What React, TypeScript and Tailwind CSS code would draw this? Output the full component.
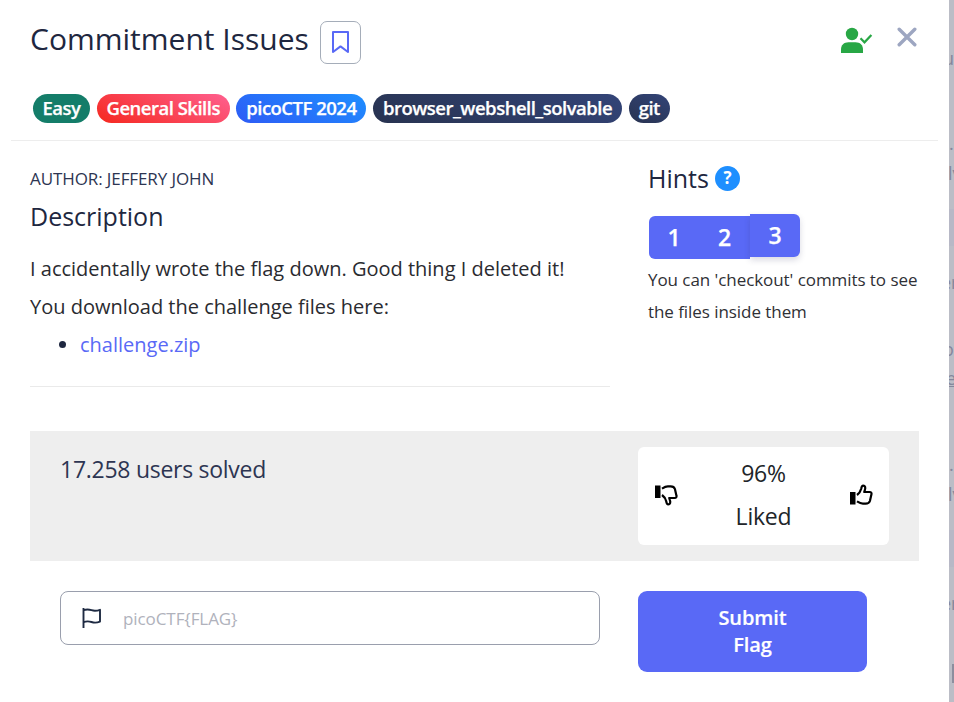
import React from "react";

const tags = [
  { label: "Easy", width: "w-[57px]", fill: "bg-[#147d69]" },
  { label: "General Skills", width: "w-[133px]", fill: "bg-[linear-gradient(25deg,#f5281e,#ff6090)]" },
  { label: "picoCTF 2024", width: "w-[130px]", fill: "bg-[linear-gradient(25deg,#2d5bf5,#1e8fff)]" },
  { label: "browser_webshell_solvable", width: "w-[249px]", fill: "bg-[linear-gradient(25deg,#283350,#334478)]" },
  { label: "git", width: "w-[41px]", fill: "bg-[linear-gradient(25deg,#283350,#334478)]" },
];

function Thumb({ down = false }: { down?: boolean }) {
  return (
    <svg width="24" height="22" viewBox="0 0 24 22" fill="none" className={down ? "relative -top-px -scale-y-100" : "relative -top-px"}>
      <rect x="1" y="8" width="5.500" height="12.500" fill="#000" />
      <path
        d="M8 11C10.400 9.200 11.600 7.300 12.200 4.800c.3-1.700.7-3.100 2-3.100 2 0 2.500 2 1.700 4.200L15.200 8h5.300c1.900 0 2.300 1.200 1.900 2.600L20.900 17c-.7 2.200-2 2.600-4.300 2.600h-2.700c-2.300 0-3.500-.7-5.900-2.200"
        stroke="#000"
        strokeWidth="2.200"
        strokeLinejoin="round"
      />
    </svg>
  );
}

function Flag() {
  return (
    <svg width="20" height="22" viewBox="0 0 20 22" fill="none" stroke="#1e2a42" strokeWidth="1.900">
      <path d="M1.500 1v20" />
      <path d="M1.500 3.200c3-1 5.500-.8 8 0s5 .8 8.500-.4v11.800c-3.500 1.400-6 1.200-8.500.400s-5-.9-8 .1" strokeLinejoin="round" />
    </svg>
  );
}

function Bookmark() {
  return (
    <svg width="17" height="22" viewBox="0 0 17 22" fill="none" stroke="#5969f6" strokeWidth="2" strokeLinejoin="round" className="relative -top-px">
      <path d="M1 1h15v20l-7.500-5.600L1 21z" />
    </svg>
  );
}

function PersonCheck() {
  return (
    <svg width="32" height="27" viewBox="0 0 32 27" fill="#28a745" className="mt-[27px]">
      <circle cx="11" cy="7" r="6.200" />
      <path d="M0 26v-3.500C0 18 3 15.200 7.500 15.200h7C19 15.200 22 18 22 22.500V26z" />
      <path d="M19.500 11.300l4 4L30.400 8" fill="none" stroke="#28a745" strokeWidth="2.200" />
    </svg>
  );
}

function Backdrop() {
  return (
    <aside className="relative h-full w-[5px] shrink-0 overflow-hidden bg-[#bbbdc6] text-[18px] leading-[24px] text-[#85879c]">
      <div className="absolute top-[209px] h-[37px] w-full bg-[#b7b8c6]" />
      <div className="absolute top-[530px] h-[37px] w-full bg-[#b7b8c6]" />
      <span className="absolute top-[46px] -left-[6px]">u</span>
      <span className="absolute top-[131px] left-0">.</span>
      <span className="absolute top-[161px] -left-[1px]">lv</span>
      <span className="absolute top-[270px] -left-[8px]">er</span>
      <span className="absolute top-[337px] -left-[6px]">o</span>
      <span className="absolute top-[366px] -left-[3px] underline">e</span>
      <span className="absolute top-[452px] left-0">.</span>
      <span className="absolute top-[482px] -left-[1px]">lv</span>
      <span className="absolute top-[591px] -left-[8px]">er</span>
      <span className="absolute top-[664px] left-[3px] h-[19px] w-[2px] bg-[#8c8e9e]" />
    </aside>
  );
}

export default function App() {
  return (
    <div className="flex h-[702px] w-[954px] overflow-hidden bg-white font-['Open_Sans',sans-serif] text-[#1e2740]">
      <main className="flex min-w-0 flex-1 flex-col">
        <header className="mx-[11px] flex h-[141px] flex-col border-b border-[#ededed]">
          <div className="flex h-[94px] items-start pr-[21px] pl-[19px]">
            <h1 className="w-[290px] pt-[19px] text-[30px] leading-[40px] whitespace-nowrap">Commitment Issues</h1>
            <button className="mt-[21px] flex h-[43px] w-[41px] items-center justify-center rounded-[7px] border border-[#a5adb9]">
              <Bookmark />
            </button>
            <div className="ml-auto flex items-start">
              <PersonCheck />
              <button aria-label="Close" className="mt-[27px] ml-[24px]">
                <svg width="20" height="20" viewBox="0 0 20 20" stroke="#9da6c1" strokeWidth="3.400" strokeLinecap="round">
                  <path d="M2.200 2.200l15.600 15.600M17.800 2.200L2.200 17.800" />
                </svg>
              </button>
            </div>
          </div>
          <div className="flex gap-[6.700px] pl-[22px]">
            {tags.map((t) => (
              <span key={t.label} className={`flex h-[29px] shrink-0 items-center justify-center rounded-full pb-[2px] text-[18.500px] font-semibold tracking-[-0.500px] whitespace-nowrap text-white [-webkit-text-stroke:0.25px_white] ${t.width} ${t.fill}`}>
                {t.label}
              </span>
            ))}
          </div>
        </header>

        <section className="flex h-[290px] pl-[30px]">
          <div className="h-[246px] w-[580px] border-b border-[#eaeaea] pt-[26px]">
            <p className="text-[17px] leading-[24px] tracking-[-0.100px] text-[#2d3552]">AUTHOR: JEFFERY JOHN</p>
            <h2 className="pt-[9px] text-[25px] leading-[32px]">Description</h2>
            <div className="pt-[18px] text-[20px] leading-[38px] whitespace-nowrap text-[#2a2b30]">
              <p>I accidentally wrote the flag down. Good thing I deleted it!</p>
              <p>You download the challenge files here:</p>
            </div>
            <ul>
              <li className="flex items-center pl-[29px] text-[20px] leading-[38px]">
                <span className="mr-[14px] mb-[2px] size-[7px] rounded-full bg-[#1e2740]" />
                <a className="text-[#5969f6]">challenge.zip</a>
              </li>
            </ul>
          </div>
          <div className="ml-[38px] w-[280px] pt-[22px]">
            <div className="flex h-[32px] items-center">
              <h2 className="mb-[2px] w-[67px] text-[25px] leading-[32px]">Hints</h2>
              <span className="mb-[2px] flex size-[25px] items-center justify-center rounded-full bg-[#1e8fff] text-[17px] font-bold text-white">?</span>
            </div>
            <div className="mt-[21px] ml-px flex h-[43px] text-[23px] font-semibold text-white [-webkit-text-stroke:0.25px_white]">
              <button className="h-[43px] w-[50px] rounded-l-[6px] bg-[#5969f6]">1</button>
              <button className="h-[43px] w-[51px] bg-[#5969f6]">2</button>
              <button className="-mt-[2px] h-[43px] w-[50px] rounded-r-[6px] bg-[#5969f6] pb-px shadow-[0_3px_6px_rgba(50,50,93,0.18)]">3</button>
            </div>
            <p className="mt-[5px] text-[17px] leading-[32px] tracking-[-0.060px] whitespace-nowrap text-[#2f3035]">
              You can 'checkout' commits to see
              <br />
              the files inside them
            </p>
          </div>
        </section>

        <section className="ml-[30px] flex h-[130px] w-[889px] bg-[#eeeeee]">
          <p className="w-[608px] pt-[22px] pl-[30px] text-[23px] leading-[32px] tracking-[-0.270px] text-[#2d3552]">17.258 users solved</p>
          <div className="mt-[16px] flex h-[98px] w-[251px] items-center justify-between rounded-[6px] bg-white px-[16px]">
            <Thumb down />
            <div className="relative -top-px text-center text-[23px] leading-[43px] tracking-[-0.220px] text-[#212529]">
              <p>96%</p>
              <p>Liked</p>
            </div>
            <Thumb />
          </div>
        </section>

        <form className="flex items-start pt-[30px] pl-[60px]">
          <label className="flex h-[54px] w-[540px] items-center rounded-[8px] border border-[#9a9fad] pl-[21px]">
            <Flag />
            <input
              className="ml-[21px] w-[400px] pt-px text-[17px] tracking-[-0.080px] outline-none placeholder:text-[#b0b2bc]"
              placeholder="picoCTF{FLAG}"
            />
          </label>
          <button type="button" className="ml-[38px] h-[81px] w-[229px] rounded-[9px] bg-[#5969f6] pb-px text-[20px] leading-[27px] font-semibold tracking-[-0.100px] text-white [-webkit-text-stroke:0.2px_white]">
            Submit
            <br />
            Flag
          </button>
        </form>
      </main>
      <Backdrop />
    </div>
  );
}
